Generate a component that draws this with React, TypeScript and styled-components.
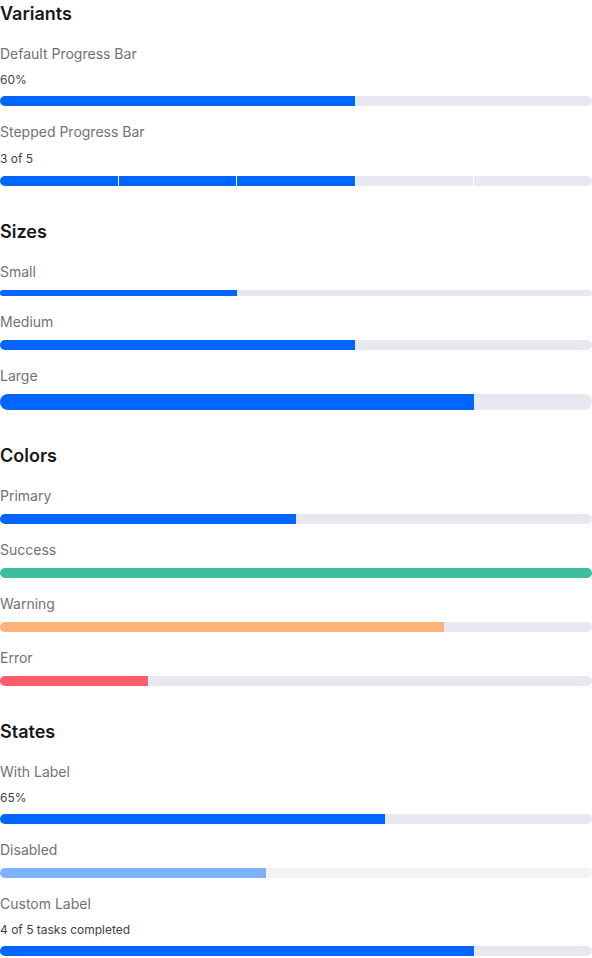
import React from "react";
import styled, { createGlobalStyle } from "styled-components";

const GlobalStyle = createGlobalStyle`
  * {
    box-sizing: border-box;
  }
  body {
    margin: 0;
    background: #ffffff;
    font-family: Inter, "Noto Sans", "Liberation Sans", sans-serif;
    -webkit-font-smoothing: antialiased;
  }
`;

const Page = styled.div`
  display: flex;
  flex-direction: column;
  gap: 32px;
  width: 592px;
`;

const Section = styled.section`
  display: flex;
  flex-direction: column;
  gap: 16px;
`;

const Heading = styled.h2`
  margin: 0;
  font-size: 18px;
  line-height: 28px;
  font-weight: 600;
  color: #18181b;
`;

const Item = styled.div`
  display: flex;
  flex-direction: column;
  gap: 8px;
`;

const Label = styled.div`
  font-size: 14px;
  line-height: 20px;
  color: #71717a;
`;

const Value = styled.div<{ $tall?: boolean }>`
  font-size: 12px;
  line-height: ${(p) => (p.$tall ? "18px" : "16px")};
  color: #3f3f46;
`;

const heights = { sm: 6, md: 10, lg: 16 };
const colors = {
  primary: "#0066ff",
  success: "#3bbf9e",
  warning: "#fdb27b",
  error: "#ff5c6c",
};

type Size = keyof typeof heights;
type Tone = keyof typeof colors;

const Track = styled.div<{ $size: Size; $disabled?: boolean }>`
  width: 100%;
  height: ${(p) => heights[p.$size]}px;
  background: #e8e8f0;
  border-radius: 9999px;
  overflow: hidden;
  opacity: ${(p) => (p.$disabled ? 0.5 : 1)};
`;

const Fill = styled.div<{ $tone: Tone }>`
  height: 100%;
  background: ${(p) => colors[p.$tone]};
`;

const Steps = styled.div`
  display: flex;
  gap: 1px;
  height: 10px;
  border-radius: 9999px;
  overflow: hidden;
`;

const Step = styled.div<{ $done: boolean }>`
  flex: 1;
  background: ${(p) => (p.$done ? colors.primary : "#e8e8f0")};
`;

interface BarProps {
  label: string;
  value: number;
  size?: Size;
  tone?: Tone;
  caption?: string;
  disabled?: boolean;
}

const Bar: React.FC<BarProps> = ({
  label,
  value,
  size = "md",
  tone = "primary",
  caption,
  disabled,
}) => (
  <Item>
    <Label>{label}</Label>
    {caption && <Value>{caption}</Value>}
    <Track $size={size} $disabled={disabled}>
      <Fill $tone={tone} style={{ width: `${value}%` }} />
    </Track>
  </Item>
);

const SteppedBar: React.FC<{ label: string; current: number; total: number }> = ({
  label,
  current,
  total,
}) => (
  <Item>
    <Label>{label}</Label>
    <Value $tall>
      {current} of {total}
    </Value>
    <Steps>
      {Array.from({ length: total }, (_, i) => (
        <Step key={i} $done={i < current} />
      ))}
    </Steps>
  </Item>
);

export default function App() {
  return (
    <>
      <GlobalStyle />
      <Page>
        <Section>
          <Heading>Variants</Heading>
          <Bar label="Default Progress Bar" value={60} caption="60%" />
          <SteppedBar label="Stepped Progress Bar" current={3} total={5} />
        </Section>
        <Section>
          <Heading>Sizes</Heading>
          <Bar label="Small" value={40} size="sm" />
          <Bar label="Medium" value={60} />
          <Bar label="Large" value={80} size="lg" />
        </Section>
        <Section>
          <Heading>Colors</Heading>
          <Bar label="Primary" value={50} />
          <Bar label="Success" value={100} tone="success" />
          <Bar label="Warning" value={75} tone="warning" />
          <Bar label="Error" value={25} tone="error" />
        </Section>
        <Section>
          <Heading>States</Heading>
          <Bar label="With Label" value={65} caption="65%" />
          <Bar label="Disabled" value={45} disabled />
          <Bar label="Custom Label" value={80} caption="4 of 5 tasks completed" />
        </Section>
      </Page>
    </>
  );
}
